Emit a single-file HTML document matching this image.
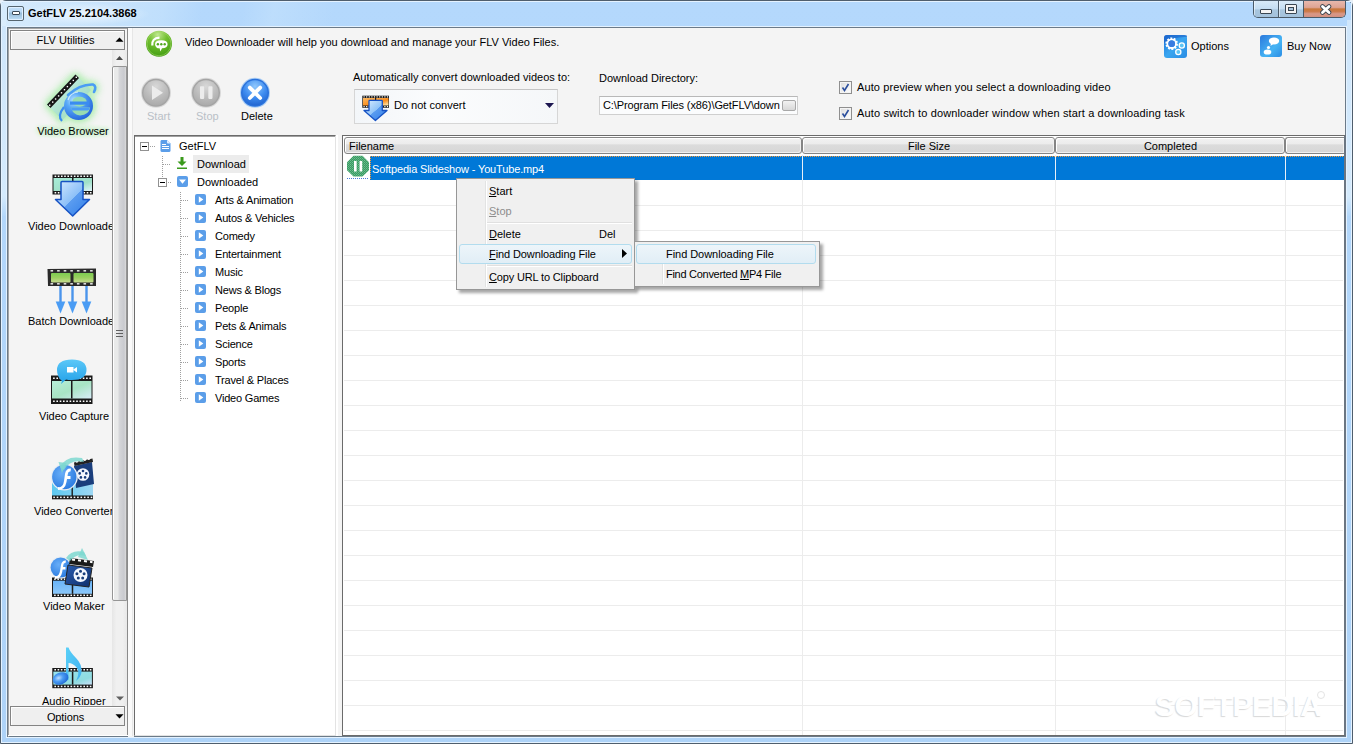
<!DOCTYPE html>
<html><head><meta charset="utf-8">
<style>
*{margin:0;padding:0;box-sizing:border-box}
html,body{width:1353px;height:744px;overflow:hidden;background:#e8eef4;font-family:"Liberation Sans",sans-serif;font-size:11px;color:#000}
.a{position:absolute}
.t{position:absolute;white-space:nowrap;line-height:13px}
#frame{left:0;top:0;width:1353px;height:744px;border:1px solid #4f5e6d;border-radius:6px 6px 0 0;background:linear-gradient(#b4d8fc,#aed3f8)}
#client{left:7px;top:27px;width:1339px;height:710px;background:#f4f4f4;border-top:1px solid #6b7a88;border-left:1px solid #6b7a88;border-right:1px solid #6b7a88;border-bottom:1px solid #6b7a88}
.hdr{height:17px;border:1px solid #858585;border-radius:3px;background:linear-gradient(#f2f2f2,#ececec 40%,#dcdcdc 45%,#d6d6d6);box-shadow:inset 1px 1px #fff,inset -1px -1px #f0f0f0}
.dh{height:1px;background-image:linear-gradient(90deg,#a0a0a0 50%,transparent 50%);background-size:2px 1px}
.dv{width:1px;background-image:linear-gradient(#a0a0a0 50%,transparent 50%);background-size:1px 2px}
.grid{background-image:linear-gradient(#ececec 1px,transparent 1px);background-size:100% 25px}
</style></head><body>
<div class="a" id="frame"></div>
<!-- frame highlight lines -->
<div class="a" style="left:1px;top:1px;width:1351px;height:1px;background:#e4f2ff"></div>
<div class="a" style="left:1px;top:1px;width:1px;height:742px;background:#e4f2ff"></div>
<div class="a" style="left:1351px;top:1px;width:1px;height:742px;background:#e4f2ff"></div>
<div class="a" style="left:2px;top:20px;width:4px;height:196px;background:linear-gradient(#cfe6fb,#d4eafc 90%,#b4d8fb)"></div><div class="a" style="left:1347px;top:20px;width:4px;height:196px;background:linear-gradient(#cfe6fb,#d4eafc 90%,#b4d8fb)"></div>
<div class="a" style="left:6px;top:26px;width:1341px;height:712px;border:1px solid #e4f2ff"></div><div class="a" style="left:1px;top:742px;width:1351px;height:1px;background:#e4f2ff"></div>

<!-- title -->
<div class="a" style="left:1px;top:2px;width:500px;height:24px;background:linear-gradient(100deg,rgba(220,238,252,.85) 0px,rgba(200,228,252,.6) 160px,rgba(176,214,251,0) 200px,rgba(176,214,251,0) 240px,rgba(200,228,252,.45) 270px,rgba(176,214,251,0) 330px)"></div>
<div class="a" style="left:20px;top:3px;width:130px;height:22px;background:radial-gradient(ellipse 65px 11px at 65px 11px,rgba(240,248,255,.9),rgba(240,248,255,0))"></div>
<div class="a" style="left:7px;top:6px;width:17px;height:15px;border:1px solid #56656f;border-radius:2px;background:linear-gradient(#c4e0f8,#b8d8f4 40%,#98bcd8 45%,#a0c4e0 60%,#c0e0f8);box-shadow:inset 0 0 0 1px #e0f0ff"></div>
<div class="a" style="left:12px;top:11px;width:8px;height:4px;border:1px solid #3c4a56;background:#fff;border-radius:1px"></div>
<div class="t" style="left:28px;top:7px;font-weight:bold;font-size:11px">GetFLV 25.2104.3868</div>

<!-- window buttons -->
<div class="a" style="left:1253px;top:1px;width:93px;height:17px;border:1px solid #4a5a68;border-top:none;border-radius:0 0 5px 5px;overflow:hidden;background:#a9c6de">
  <div class="a" style="left:0;top:0;width:24px;height:16px;background:linear-gradient(#d8eaf8,#c4ddf2 50%,#a8c6de 55%,#a4c2dc);box-shadow:inset 1px 0 rgba(255,255,255,.5)"></div>
  <div class="a" style="left:24px;top:0;width:1px;height:16px;background:#4a5a68"></div>
  <div class="a" style="left:25px;top:0;width:24px;height:16px;background:linear-gradient(#d8eaf8,#c4ddf2 50%,#a8c6de 55%,#a4c2dc);box-shadow:inset 1px 0 rgba(255,255,255,.5)"></div>
  <div class="a" style="left:49px;top:0;width:1px;height:16px;background:#4a5a68"></div>
  <div class="a" style="left:50px;top:0;width:43px;height:16px;background:linear-gradient(#e8b8ac,#dea494 40%,#c8783c 50%,#cc7a4a 65%,#d89888 80%,#d49080)"></div>
  <div class="a" style="left:6px;top:8px;width:12px;height:5px;border:1px solid #3a4652;background:#f4f4f4;border-radius:1px"></div>
  <div class="a" style="left:31px;top:3px;width:12px;height:10px;border:1px solid #3a4652;background:#f4f4f4;border-radius:1px"></div>
  <div class="a" style="left:34px;top:6px;width:6px;height:4px;border:1px solid #3a4652;background:#a9c6de"></div>
  <svg class="a" style="left:64px;top:1px" width="16" height="13" viewBox="0 0 16 13"><path d="M4.5 4.5 L11 10.5 M11 4.5 L4.5 10.5" stroke="#3e4650" stroke-width="4.6" stroke-linecap="round"/><path d="M4.5 4.5 L11 10.5 M11 4.5 L4.5 10.5" stroke="#fff" stroke-width="2.8" stroke-linecap="round"/></svg>
</div>

<div class="a" id="client"></div>

<!-- LEFT PANEL -->
<div class="a" style="left:8px;top:28px;width:1px;height:709px;background:#a5a5a5"></div>
<div class="a" style="left:8px;top:28px;width:119px;height:1px;background:#a5a5a5"></div>
<div class="a" style="left:127px;top:28px;width:1px;height:708px;background:#8b8b8b"></div>
<div class="a" style="left:10px;top:30px;width:115px;height:20px;border:1px solid #848484;background:#efefef;box-shadow:inset 1px 1px #fff"></div>
<div class="t" style="left:10px;top:34px;width:111px;text-align:center">FLV Utilities</div>
<svg class="a" style="left:115px;top:37px" width="9" height="5"><path d="M0.5 4.8 L4.5 0.6 L8.5 4.8Z" fill="#000"/></svg>


<!-- left scrollbar -->
<div class="a" style="left:112px;top:50px;width:15px;height:656px;background:linear-gradient(90deg,#e6e6e6,#f0f0f0 30%,#f0f0f0 70%,#e8e8e8)"></div>

<svg class="a" style="left:115px;top:55px" width="9" height="6"><path d="M1 5 L4.5 1 L8 5Z" fill="#4a4a4a"/></svg>
<div class="a" style="left:112px;top:66px;width:15px;height:535px;border:1px solid #959595;border-radius:2px 0 0 2px;background:linear-gradient(90deg,#fff 0,#fff 1px,#e9eaea 1px,#e9eaea 5px,#d6d7da 6px,#c9cacf 11px,#dcdcdc 13px)"></div>
<div class="a" style="left:116px;top:330px;width:7px;height:1px;background:#606060;box-shadow:0 3px #606060,0 6px #606060"></div>
<svg class="a" style="left:116px;top:696px" width="8" height="5"><path d="M0 0.5 L4 4.5 L8 0.5Z" fill="#606060"/></svg>
<div class="a" style="left:10px;top:706px;width:115px;height:20px;border:1px solid #848484;background:#efefef;box-shadow:inset 1px 1px #fff"></div>
<div class="t" style="left:10px;top:711px;width:111px;text-align:center;letter-spacing:-.1px">Options</div>
<svg class="a" style="left:115px;top:714px" width="9" height="5"><path d="M0.5 0.2 L4.5 4.4 L8.5 0.2Z" fill="#000"/></svg>
<div class="a" style="left:8px;top:735px;width:120px;height:1px;background:#fff"></div>

<!-- left icon labels -->
<div class="a" style="left:32px;top:122px;width:82px;height:18px;background:radial-gradient(ellipse 42px 9px at 41px 9px,rgba(214,244,214,.9),rgba(244,244,244,0))"></div>
<div class="a" style="left:9px;top:60px;width:103px;height:645px;overflow:hidden"><div class="t" style="left:3px;top:65px;width:122px;text-align:center;text-shadow:0 0 3px #c0eec0,0 0 5px #c8f0c8,0 0 6px #d0f2d0">Video Browser</div>
<div class="t" style="left:19px;top:160px">Video Downloader</div>
<div class="t" style="left:19px;top:255px">Batch Downloader</div>
<div class="t" style="left:30px;top:350px">Video Capture</div>
<div class="t" style="left:25px;top:445px">Video Converter</div>
<div class="t" style="left:34px;top:540px">Video Maker</div>
<div class="t" style="left:33px;top:635px">Audio Ripper</div>
</div>
<!-- cover clipped text -->


<!-- splitter between left & tree -->
<div class="a" style="left:128px;top:28px;width:6px;height:709px;background:#f4f4f4"></div>
<div class="a" style="left:128px;top:28px;width:4px;height:708px;background:#fafafa"></div><div class="a" style="left:132px;top:28px;width:1px;height:708px;background:#e6e6e6"></div>

<!-- TOOLBAR -->
<div class="t" style="left:185px;top:36px">Video Downloader will help you download and manage your FLV Video Files.</div>
<div class="t" style="left:147px;top:110px;color:#b9c0c7">Start</div>
<div class="t" style="left:196px;top:110px;color:#b9c0c7">Stop</div>
<div class="t" style="left:241px;top:110px">Delete</div>
<div class="t" style="left:353px;top:71px">Automatically convert downloaded videos to:</div>
<div class="a" style="left:354px;top:89px;width:204px;height:35px;border:1px solid #d6d6d6;border-top-color:#c4c4c4;background:linear-gradient(90deg,#f3f6f9,#fbfcfd 40%,#f5f7f9)"></div>
<div class="t" style="left:394px;top:99px">Do not convert</div>
<svg class="a" style="left:545px;top:103px" width="9" height="5"><path d="M0 0 L9 0 L4.5 5Z" fill="#1c1650"/></svg>
<div class="t" style="left:599px;top:72px">Download Directory:</div>
<div class="a" style="left:599px;top:96px;width:199px;height:19px;border:1px solid #cfcfcf;border-top-color:#b8b8b8;background:#fbfcfd"></div>
<div class="t" style="left:603px;top:99px;letter-spacing:-.1px">C:\Program Files (x86)\GetFLV\down</div>
<div class="a" style="left:782px;top:100px;width:14px;height:11px;border:1px solid #a8a8a8;border-radius:2px;background:linear-gradient(#f2f2f2,#d8d8d8)"></div>
<div class="a" style="left:839px;top:81px;width:13px;height:13px;border:1px solid #8f8f8f;background:linear-gradient(135deg,#dcdcdc,#fff);box-shadow:inset 0 0 0 1px #f4f4f4"></div>
<div class="a" style="left:839px;top:107px;width:13px;height:13px;border:1px solid #8f8f8f;background:linear-gradient(135deg,#dcdcdc,#fff);box-shadow:inset 0 0 0 1px #f4f4f4"></div>
<svg class="a" style="left:840px;top:82px" width="11" height="11"><path d="M2.5 5.5 L4.5 8.5 L8.5 2" stroke="#2b4e9c" stroke-width="1.6" fill="none"/></svg>
<svg class="a" style="left:840px;top:108px" width="11" height="11"><path d="M2.5 5.5 L4.5 8.5 L8.5 2" stroke="#2b4e9c" stroke-width="1.6" fill="none"/></svg>
<div class="t" style="left:857px;top:81px;letter-spacing:.1px">Auto preview when you select a downloading video</div>
<div class="t" style="left:857px;top:107px;letter-spacing:.14px">Auto switch to downloader window when start a downloading task</div>
<div class="t" style="left:1191px;top:40px">Options</div>
<div class="t" style="left:1287px;top:40px">Buy Now</div>

<!-- TREE PANEL -->
<div class="a" style="left:134px;top:135px;width:202px;height:601px;background:#fff;border:1px solid #e3e3e3;border-top-color:#6b6b6b;border-left-color:#6b6b6b"></div>
<div class="a" style="left:135px;top:136px;width:200px;height:599px;border-top:1px solid #a0a0a0"></div>

<!-- splitter between tree & list -->
<div class="a" style="left:336px;top:135px;width:6px;height:601px;background:#f4f4f4;border-left:2px solid #fff"></div>


<!-- LIST PANEL -->
<div class="a" style="left:342px;top:135px;width:1004px;height:601px;background:#fff;border:1px solid #6b6b6b;border-right:2px solid #6b7682"></div>
<div class="a grid" style="left:344px;top:205px;width:999px;height:530px"></div>


<!-- list header -->
<div class="a" style="left:344px;top:137px;width:999px;height:17px;background:#fff"></div>
<div class="a hdr" style="left:344px;top:137px;width:458px"></div>
<div class="a hdr" style="left:802px;top:137px;width:253px"></div>
<div class="a hdr" style="left:1055px;top:137px;width:230px"></div>
<div class="a hdr" style="left:1285px;top:137px;width:59px;border-right:none;border-radius:3px 0 0 3px"></div>
<div class="t" style="left:349px;top:140px">Filename</div>
<div class="t" style="left:802px;top:140px;width:254px;text-align:center">File Size</div>
<div class="t" style="left:1055px;top:140px;width:231px;text-align:center">Completed</div>
<!-- column grid lines -->
<div class="a" style="left:802px;top:155px;width:1px;height:580px;background:#ececec"></div>
<div class="a" style="left:1055px;top:155px;width:1px;height:580px;background:#ececec"></div>
<div class="a" style="left:1285px;top:155px;width:1px;height:580px;background:#ececec"></div>
<!-- selected row -->
<div class="a" style="left:370px;top:156px;width:974px;height:24px;background:#0078d7"></div>
<div class="a" style="left:370px;top:156px;width:974px;height:1px;background-image:linear-gradient(90deg,#f39a3a 50%,transparent 50%);background-size:2px 1px"></div>
<div class="a" style="left:370px;top:156px;width:1px;height:24px;background-image:linear-gradient(#f39a3a 50%,transparent 50%);background-size:1px 2px"></div>
<div class="a" style="left:802px;top:156px;width:1px;height:24px;background:#e8f0f8"></div>
<div class="a" style="left:1055px;top:156px;width:1px;height:24px;background:#e8f0f8"></div>
<div class="a" style="left:1285px;top:156px;width:1px;height:24px;background:#e8f0f8"></div>
<div class="t" style="left:372px;top:163px;color:#fff;letter-spacing:-.15px">Softpedia Slideshow - YouTube.mp4</div>
<svg class="a" style="left:346px;top:155px" width="24" height="25" viewBox="346 155 24 25"><defs><pattern id="p_dith" width="2" height="2" patternUnits="userSpaceOnUse"><rect width="2" height="2" fill="#3a9a62"/><rect width="1" height="1" fill="#6cc090"/><rect x="1" y="1" width="1" height="1" fill="#5ab080"/></pattern></defs>
 <path d="M353.5 155.8 H362.5 L369 162.3 V170.2 L362.5 176.6 H353.5 L347 170.2 V162.3Z" fill="url(#p_dith)"/>
 <rect x="354" y="161" width="2.6" height="10.5" fill="#fff"/><rect x="359.6" y="161" width="2.6" height="10.5" fill="#fff"/>
 <path d="M347 178.5 H369" stroke="#4a7ad8" stroke-width="1" stroke-dasharray="1 1"/>
</svg>

<!-- tree -->
<div class="a" style="left:140px;top:142px;width:9px;height:9px;border:1px solid #919191;background:#fff"></div>
<div class="a" style="left:142px;top:146px;width:5px;height:1px;background:#000"></div>
<div class="a" style="left:158px;top:178px;width:9px;height:9px;border:1px solid #919191;background:#fff"></div>
<div class="a" style="left:160px;top:182px;width:5px;height:1px;background:#000"></div>
<div class="a dh" style="left:150px;top:146px;width:6px"></div>
<div class="a dv" style="left:162px;top:156px;height:22px"></div>
<div class="a dh" style="left:163px;top:164px;width:8px"></div>
<div class="a dh" style="left:168px;top:182px;width:4px"></div>
<div class="a dv" style="left:180px;top:192px;height:210px"></div>
<div class="a" id="treeh"></div>
<svg class="a" style="left:160px;top:140px" width="11" height="12" viewBox="0 0 11 12"><path d="M1.5 0 H7 L10.5 3.5 V10.5 Q10.5 12 9 12 H2 Q0.5 12 0.5 10.5 V1.5 Q0.5 0 1.5 0Z" fill="#5b9ee9"/><path d="M7 0 L10.5 3.5 H8 Q7 3.5 7 2.5Z" fill="#e4efff"/><path d="M2 4.5 H6 M2 6.5 H9 M2 8.5 H9" stroke="#fff" stroke-width="1"/></svg>
<div class="a" style="left:193px;top:155px;width:56px;height:18px;background:#ececec"></div>
<svg class="a" style="left:177px;top:157px" width="10" height="12" viewBox="0 0 10 12"><path d="M3.5 0 H6.5 V4.5 H9.5 L5 9 L0.5 4.5 H3.5Z" fill="#3a9a1c"/><rect x="0" y="10.5" width="10" height="1.5" fill="#3a9a1c"/></svg>
<div class="t" style="left:179px;top:140px">GetFLV</div>
<div class="t" style="left:197px;top:158px">Download</div>
<svg class="a" style="left:177px;top:176px" width="11" height="11" viewBox="0 0 11 11"><rect x="0" y="0" width="11" height="11" rx="2" fill="#5b9ee9"/><path d="M2 3.5 H9 L5.5 7.8Z" fill="#fff"/></svg>
<div class="t" style="left:197px;top:176px">Downloaded</div>
<div class="a dh" style="left:181px;top:200px;width:8px"></div><svg class="a" style="left:195px;top:194px" width="11" height="11" viewBox="0 0 11 11"><rect x="0" y="0" width="11" height="11" rx="2" fill="#5b9ee9"/><path d="M3.8 2.2 V8.8 L8.3 5.5Z" fill="#fff"/></svg><div class="t" style="left:215px;top:194px;letter-spacing:-.2px">Arts &amp; Animation</div>
<div class="a dh" style="left:181px;top:218px;width:8px"></div><svg class="a" style="left:195px;top:212px" width="11" height="11" viewBox="0 0 11 11"><rect x="0" y="0" width="11" height="11" rx="2" fill="#5b9ee9"/><path d="M3.8 2.2 V8.8 L8.3 5.5Z" fill="#fff"/></svg><div class="t" style="left:215px;top:212px;letter-spacing:-.2px">Autos &amp; Vehicles</div>
<div class="a dh" style="left:181px;top:236px;width:8px"></div><svg class="a" style="left:195px;top:230px" width="11" height="11" viewBox="0 0 11 11"><rect x="0" y="0" width="11" height="11" rx="2" fill="#5b9ee9"/><path d="M3.8 2.2 V8.8 L8.3 5.5Z" fill="#fff"/></svg><div class="t" style="left:215px;top:230px;letter-spacing:-.2px">Comedy</div>
<div class="a dh" style="left:181px;top:254px;width:8px"></div><svg class="a" style="left:195px;top:248px" width="11" height="11" viewBox="0 0 11 11"><rect x="0" y="0" width="11" height="11" rx="2" fill="#5b9ee9"/><path d="M3.8 2.2 V8.8 L8.3 5.5Z" fill="#fff"/></svg><div class="t" style="left:215px;top:248px;letter-spacing:-.2px">Entertainment</div>
<div class="a dh" style="left:181px;top:272px;width:8px"></div><svg class="a" style="left:195px;top:266px" width="11" height="11" viewBox="0 0 11 11"><rect x="0" y="0" width="11" height="11" rx="2" fill="#5b9ee9"/><path d="M3.8 2.2 V8.8 L8.3 5.5Z" fill="#fff"/></svg><div class="t" style="left:215px;top:266px;letter-spacing:-.2px">Music</div>
<div class="a dh" style="left:181px;top:290px;width:8px"></div><svg class="a" style="left:195px;top:284px" width="11" height="11" viewBox="0 0 11 11"><rect x="0" y="0" width="11" height="11" rx="2" fill="#5b9ee9"/><path d="M3.8 2.2 V8.8 L8.3 5.5Z" fill="#fff"/></svg><div class="t" style="left:215px;top:284px;letter-spacing:-.2px">News &amp; Blogs</div>
<div class="a dh" style="left:181px;top:308px;width:8px"></div><svg class="a" style="left:195px;top:302px" width="11" height="11" viewBox="0 0 11 11"><rect x="0" y="0" width="11" height="11" rx="2" fill="#5b9ee9"/><path d="M3.8 2.2 V8.8 L8.3 5.5Z" fill="#fff"/></svg><div class="t" style="left:215px;top:302px;letter-spacing:-.2px">People</div>
<div class="a dh" style="left:181px;top:326px;width:8px"></div><svg class="a" style="left:195px;top:320px" width="11" height="11" viewBox="0 0 11 11"><rect x="0" y="0" width="11" height="11" rx="2" fill="#5b9ee9"/><path d="M3.8 2.2 V8.8 L8.3 5.5Z" fill="#fff"/></svg><div class="t" style="left:215px;top:320px;letter-spacing:-.2px">Pets &amp; Animals</div>
<div class="a dh" style="left:181px;top:344px;width:8px"></div><svg class="a" style="left:195px;top:338px" width="11" height="11" viewBox="0 0 11 11"><rect x="0" y="0" width="11" height="11" rx="2" fill="#5b9ee9"/><path d="M3.8 2.2 V8.8 L8.3 5.5Z" fill="#fff"/></svg><div class="t" style="left:215px;top:338px;letter-spacing:-.2px">Science</div>
<div class="a dh" style="left:181px;top:362px;width:8px"></div><svg class="a" style="left:195px;top:356px" width="11" height="11" viewBox="0 0 11 11"><rect x="0" y="0" width="11" height="11" rx="2" fill="#5b9ee9"/><path d="M3.8 2.2 V8.8 L8.3 5.5Z" fill="#fff"/></svg><div class="t" style="left:215px;top:356px;letter-spacing:-.2px">Sports</div>
<div class="a dh" style="left:181px;top:380px;width:8px"></div><svg class="a" style="left:195px;top:374px" width="11" height="11" viewBox="0 0 11 11"><rect x="0" y="0" width="11" height="11" rx="2" fill="#5b9ee9"/><path d="M3.8 2.2 V8.8 L8.3 5.5Z" fill="#fff"/></svg><div class="t" style="left:215px;top:374px;letter-spacing:-.2px">Travel &amp; Places</div>
<div class="a dh" style="left:181px;top:398px;width:8px"></div><svg class="a" style="left:195px;top:392px" width="11" height="11" viewBox="0 0 11 11"><rect x="0" y="0" width="11" height="11" rx="2" fill="#5b9ee9"/><path d="M3.8 2.2 V8.8 L8.3 5.5Z" fill="#fff"/></svg><div class="t" style="left:215px;top:392px;letter-spacing:-.2px">Video Games</div>

<!-- context menu -->
<div class="a" style="left:459px;top:181px;width:179px;height:112px;background:rgba(0,0,0,.35);filter:blur(1.5px)"></div>
<div class="a" style="left:456px;top:178px;width:179px;height:112px;background:#f0f0f0;border:1px solid #979797"></div>
<div class="a" style="left:485px;top:181px;width:1px;height:106px;background:#e2e3e3;box-shadow:1px 0 #fff"></div>
<div class="a" style="left:487px;top:222px;width:145px;height:1px;background:#e0e0e0;box-shadow:0 1px #fff"></div>
<div class="a" style="left:487px;top:265px;width:145px;height:1px;background:#e0e0e0;box-shadow:0 1px #fff"></div>
<div class="a" style="left:459px;top:244px;width:173px;height:20px;border:1px solid #b2dcee;border-radius:3px;background:linear-gradient(#edf5fa,#e1eef6)"></div>
<div class="t" style="left:489px;top:185px"><u>S</u>tart</div>
<div class="t" style="left:489px;top:205px;color:#8d8d8d"><u>S</u>top</div>
<div class="t" style="left:489px;top:228px"><u>D</u>elete</div>
<div class="t" style="left:599px;top:228px">Del</div>
<div class="t" style="left:489px;top:248px;letter-spacing:-.1px"><u>F</u>ind Downloading File</div>
<svg class="a" style="left:622px;top:249px" width="5" height="9"><path d="M0 0 L5 4.5 L0 9Z" fill="#000"/></svg>
<div class="t" style="left:489px;top:271px;letter-spacing:-.15px"><u>C</u>opy URL to Clipboard</div>
<!-- submenu -->
<div class="a" style="left:637px;top:244px;width:186px;height:46px;background:rgba(0,0,0,.35);filter:blur(1.5px)"></div>
<div class="a" style="left:634px;top:241px;width:186px;height:46px;background:#f0f0f0;border:1px solid #979797"></div>
<div class="a" style="left:662px;top:244px;width:1px;height:40px;background:#e2e3e3;box-shadow:1px 0 #fff"></div>
<div class="a" style="left:636px;top:244px;width:180px;height:20px;border:1px solid #b2dcee;border-radius:3px;background:linear-gradient(#edf5fa,#e1eef6)"></div>
<div class="t" style="left:666px;top:248px;letter-spacing:-.05px">Find Downloading File</div>
<div class="t" style="left:666px;top:268px;letter-spacing:-.28px">Find Converted <u>M</u>P4 File</div>

<!-- ICONS_LEFT -->
<svg class="a" style="left:44px;top:168px" width="56" height="52" viewBox="44 168 56 52"><defs><linearGradient id="g_fr1" x1="0" y1="0" x2="1" y2="1"><stop offset="0" stop-color="#a8ecd8"/><stop offset=".6" stop-color="#9fe0c8"/><stop offset="1" stop-color="#e0f4fa"/></linearGradient><linearGradient id="g_ar1" x1="0" y1="0" x2="1" y2="1"><stop offset="0" stop-color="#d8ebff"/><stop offset=".5" stop-color="#8cc0f8"/><stop offset=".51" stop-color="#5a9cf0"/><stop offset="1" stop-color="#2f7de8"/></linearGradient></defs><rect x="52.5" y="174.5" width="40.5" height="20" fill="#1a1a1a"/><rect x="53.5" y="178.0" width="38.5" height="13.0" fill="url(#g_fr1)"/><rect x="54.6" y="175.5" width="1.6" height="1.5" fill="#fff"/><rect x="54.6" y="192.0" width="1.6" height="1.5" fill="#fff"/><rect x="57.8" y="175.5" width="1.6" height="1.5" fill="#fff"/><rect x="57.8" y="192.0" width="1.6" height="1.5" fill="#fff"/><rect x="61.0" y="175.5" width="1.6" height="1.5" fill="#fff"/><rect x="61.0" y="192.0" width="1.6" height="1.5" fill="#fff"/><rect x="64.2" y="175.5" width="1.6" height="1.5" fill="#fff"/><rect x="64.2" y="192.0" width="1.6" height="1.5" fill="#fff"/><rect x="67.4" y="175.5" width="1.6" height="1.5" fill="#fff"/><rect x="67.4" y="192.0" width="1.6" height="1.5" fill="#fff"/><rect x="70.6" y="175.5" width="1.6" height="1.5" fill="#fff"/><rect x="70.6" y="192.0" width="1.6" height="1.5" fill="#fff"/><rect x="73.9" y="175.5" width="1.6" height="1.5" fill="#fff"/><rect x="73.9" y="192.0" width="1.6" height="1.5" fill="#fff"/><rect x="77.1" y="175.5" width="1.6" height="1.5" fill="#fff"/><rect x="77.1" y="192.0" width="1.6" height="1.5" fill="#fff"/><rect x="80.3" y="175.5" width="1.6" height="1.5" fill="#fff"/><rect x="80.3" y="192.0" width="1.6" height="1.5" fill="#fff"/><rect x="83.5" y="175.5" width="1.6" height="1.5" fill="#fff"/><rect x="83.5" y="192.0" width="1.6" height="1.5" fill="#fff"/><rect x="86.7" y="175.5" width="1.6" height="1.5" fill="#fff"/><rect x="86.7" y="192.0" width="1.6" height="1.5" fill="#fff"/><rect x="89.9" y="175.5" width="1.6" height="1.5" fill="#fff"/><rect x="89.9" y="192.0" width="1.6" height="1.5" fill="#fff"/><rect x="72.0" y="178.0" width="1.5" height="13.0" fill="#1a1a1a"/><path d="M61 182.5 Q61 181.5 62 181.5 H82 Q83 181.5 83 182.5 V199.5 H89.5 L72.7 216 L55.5 199.5 H61Z" fill="url(#g_ar1)" stroke="#1652c4" stroke-width="1.5" stroke-linejoin="round"/></svg>
<svg class="a" style="left:40px;top:262px" width="64" height="56" viewBox="40 262 64 56"><defs><linearGradient id="g_gr" x1="0" y1="0" x2="0" y2="1"><stop offset="0" stop-color="#7ccc50"/><stop offset=".5" stop-color="#9ad060"/><stop offset="1" stop-color="#c8dc90"/></linearGradient></defs><path d="M47.5 269 L96 268.5 L96 286 L48 286Z" fill="#2a2a2a"/><rect x="50.5" y="270" width="2.6" height="1.6" fill="#ddd"/><rect x="50.5" y="283" width="2.6" height="1.6" fill="#ddd"/><rect x="57.1" y="270" width="2.6" height="1.6" fill="#ddd"/><rect x="57.1" y="283" width="2.6" height="1.6" fill="#ddd"/><rect x="63.7" y="270" width="2.6" height="1.6" fill="#ddd"/><rect x="63.7" y="283" width="2.6" height="1.6" fill="#ddd"/><rect x="70.3" y="270" width="2.6" height="1.6" fill="#ddd"/><rect x="70.3" y="283" width="2.6" height="1.6" fill="#ddd"/><rect x="76.9" y="270" width="2.6" height="1.6" fill="#ddd"/><rect x="76.9" y="283" width="2.6" height="1.6" fill="#ddd"/><rect x="83.5" y="270" width="2.6" height="1.6" fill="#ddd"/><rect x="83.5" y="283" width="2.6" height="1.6" fill="#ddd"/><rect x="90.1" y="270" width="2.6" height="1.6" fill="#ddd"/><rect x="90.1" y="283" width="2.6" height="1.6" fill="#ddd"/><rect x="51" y="273" width="19.5" height="9.5" rx="1" fill="url(#g_gr)"/><rect x="73.5" y="273" width="20" height="9.5" rx="1" fill="url(#g_gr)"/><rect x="59.3" y="286" width="2.4" height="16" fill="#4a94ec"/><path d="M55.7 301.5 H65.3 L60.5 313.5Z" fill="#4a9cf4"/><rect x="71.3" y="286" width="2.4" height="16" fill="#4a94ec"/><path d="M67.7 301.5 H77.3 L72.5 313.5Z" fill="#4a9cf4"/><rect x="85.3" y="286" width="2.4" height="16" fill="#4a94ec"/><path d="M81.7 301.5 H91.3 L86.5 313.5Z" fill="#4a9cf4"/></svg>
<svg class="a" style="left:44px;top:352px" width="56" height="56" viewBox="44 352 56 56"><defs><linearGradient id="g_fr2" x1="0" y1="0" x2="1" y2="1"><stop offset="0" stop-color="#b8eed8"/><stop offset=".5" stop-color="#a8e4c4"/><stop offset="1" stop-color="#d8ecf8"/></linearGradient><linearGradient id="g_bb" x1="0" y1="0" x2="0" y2="1"><stop offset="0" stop-color="#5cc8f8"/><stop offset="1" stop-color="#22a0e8"/></linearGradient></defs><rect x="51" y="375.5" width="41.5" height="28.5" fill="#1a1a1a"/><rect x="52" y="381.0" width="39.5" height="17.5" fill="url(#g_fr2)"/><rect x="53.1" y="377.5" width="1.6" height="1.5" fill="#fff"/><rect x="53.1" y="400.5" width="1.6" height="1.5" fill="#fff"/><rect x="56.4" y="377.5" width="1.6" height="1.5" fill="#fff"/><rect x="56.4" y="400.5" width="1.6" height="1.5" fill="#fff"/><rect x="59.7" y="377.5" width="1.6" height="1.5" fill="#fff"/><rect x="59.7" y="400.5" width="1.6" height="1.5" fill="#fff"/><rect x="63.0" y="377.5" width="1.6" height="1.5" fill="#fff"/><rect x="63.0" y="400.5" width="1.6" height="1.5" fill="#fff"/><rect x="66.3" y="377.5" width="1.6" height="1.5" fill="#fff"/><rect x="66.3" y="400.5" width="1.6" height="1.5" fill="#fff"/><rect x="69.6" y="377.5" width="1.6" height="1.5" fill="#fff"/><rect x="69.6" y="400.5" width="1.6" height="1.5" fill="#fff"/><rect x="72.9" y="377.5" width="1.6" height="1.5" fill="#fff"/><rect x="72.9" y="400.5" width="1.6" height="1.5" fill="#fff"/><rect x="76.2" y="377.5" width="1.6" height="1.5" fill="#fff"/><rect x="76.2" y="400.5" width="1.6" height="1.5" fill="#fff"/><rect x="79.5" y="377.5" width="1.6" height="1.5" fill="#fff"/><rect x="79.5" y="400.5" width="1.6" height="1.5" fill="#fff"/><rect x="82.8" y="377.5" width="1.6" height="1.5" fill="#fff"/><rect x="82.8" y="400.5" width="1.6" height="1.5" fill="#fff"/><rect x="86.1" y="377.5" width="1.6" height="1.5" fill="#fff"/><rect x="86.1" y="400.5" width="1.6" height="1.5" fill="#fff"/><rect x="89.4" y="377.5" width="1.6" height="1.5" fill="#fff"/><rect x="89.4" y="400.5" width="1.6" height="1.5" fill="#fff"/><rect x="71.0" y="381.0" width="1.5" height="17.5" fill="#1a1a1a"/><path d="M62 381 Q57 377 57 370 Q57 359.5 72 359.5 Q86.5 359.5 86.5 370 Q86.5 380 72 380 Q68 380 66 379.5 L61 384Z" fill="url(#g_bb)"/><rect x="67" y="367" width="6.5" height="5.5" fill="#fff"/><path d="M73 369.7 L77 367 V372.5Z" fill="#fff"/></svg>
<svg class="a" style="left:44px;top:450px" width="56" height="52" viewBox="44 450 56 52"><defs><linearGradient id="g_fr3" x1="0" y1="0" x2="1" y2="0"><stop offset="0" stop-color="#5cc8f0"/><stop offset="1" stop-color="#9ed8f4"/></linearGradient><radialGradient id="g_cf" cx=".4" cy=".35" r=".7"><stop offset="0" stop-color="#68aef8"/><stop offset="1" stop-color="#2a7ae0"/></radialGradient></defs><rect x="52" y="482" width="41" height="17" fill="url(#g_fr3)"/><rect x="52" y="495.5" width="41" height="3.8" fill="#1a1a1a"/><rect x="53.3" y="496.6" width="1.6" height="1.5" fill="#fff"/><rect x="56.7" y="496.6" width="1.6" height="1.5" fill="#fff"/><rect x="60.1" y="496.6" width="1.6" height="1.5" fill="#fff"/><rect x="63.5" y="496.6" width="1.6" height="1.5" fill="#fff"/><rect x="66.9" y="496.6" width="1.6" height="1.5" fill="#fff"/><rect x="70.3" y="496.6" width="1.6" height="1.5" fill="#fff"/><rect x="73.7" y="496.6" width="1.6" height="1.5" fill="#fff"/><rect x="77.1" y="496.6" width="1.6" height="1.5" fill="#fff"/><rect x="80.5" y="496.6" width="1.6" height="1.5" fill="#fff"/><rect x="83.9" y="496.6" width="1.6" height="1.5" fill="#fff"/><rect x="87.3" y="496.6" width="1.6" height="1.5" fill="#fff"/><rect x="90.7" y="496.6" width="1.6" height="1.5" fill="#fff"/><rect x="71.5" y="482" width="1.4" height="14" fill="#1a1a1a"/><path d="M74 466 L92 462 L94 484 L76 488Z" fill="#1a3e7c"/><path d="M74 462.5 L92.5 458.5 L93 462 L74.5 466Z" fill="#222"/><path d="M76 462 l2 -0.5 M80 461 l2 -0.5 M84 460.2 l2 -0.5 M88 459.4 l2 -0.5" stroke="#fff" stroke-width="1.4"/><circle cx="83" cy="474.5" r="6.3" fill="#f4f8ff"/><circle cx="83" cy="471.0" r="1.3" fill="#1a3e7c"/><circle cx="86.3" cy="473.4" r="1.3" fill="#1a3e7c"/><circle cx="85.1" cy="477.4" r="1.3" fill="#1a3e7c"/><circle cx="80.9" cy="477.4" r="1.3" fill="#1a3e7c"/><circle cx="79.7" cy="473.4" r="1.3" fill="#1a3e7c"/><circle cx="64.3" cy="477" r="13.5" fill="#e8eef4"/><circle cx="64.3" cy="477" r="12.2" fill="url(#g_cf)"/><path d="M58 487 Q63 488 64 481 L65 474 Q66 468 71 468.5 L70.5 471.5 Q68 471 67.8 474 L67.5 476 H70.5 V479 H67 L66.5 482 Q65 490 58 490Z" fill="#fff"/><path d="M60 467 Q66 455 82 458 L84 462 Q70 459 64 470Z" fill="#7ed8d0" opacity=".85"/><path d="M58.5 462 L62 473 L66.5 463Z" fill="#7ed8d0" opacity=".85"/></svg>
<svg class="a" style="left:44px;top:545px" width="56" height="56" viewBox="44 545 56 56"><defs><linearGradient id="g_fr4" x1="0" y1="0" x2="0" y2="1"><stop offset="0" stop-color="#6ab4f8"/><stop offset="1" stop-color="#8cc8fa"/></linearGradient><radialGradient id="g_cf2" cx=".4" cy=".35" r=".7"><stop offset="0" stop-color="#68aef8"/><stop offset="1" stop-color="#2a7ae0"/></radialGradient><linearGradient id="g_cl" x1="0" y1="0" x2="1" y2="1"><stop offset="0" stop-color="#2a5cb0"/><stop offset="1" stop-color="#0e2e6a"/></linearGradient></defs><rect x="52" y="577.5" width="41" height="19.5" fill="#1a1a1a"/><rect x="53" y="580.7" width="39" height="13.1" fill="url(#g_fr4)"/><rect x="54.1" y="578.4" width="1.6" height="1.5" fill="#fff"/><rect x="54.1" y="594.6" width="1.6" height="1.5" fill="#fff"/><rect x="57.4" y="578.4" width="1.6" height="1.5" fill="#fff"/><rect x="57.4" y="594.6" width="1.6" height="1.5" fill="#fff"/><rect x="60.6" y="578.4" width="1.6" height="1.5" fill="#fff"/><rect x="60.6" y="594.6" width="1.6" height="1.5" fill="#fff"/><rect x="63.9" y="578.4" width="1.6" height="1.5" fill="#fff"/><rect x="63.9" y="594.6" width="1.6" height="1.5" fill="#fff"/><rect x="67.1" y="578.4" width="1.6" height="1.5" fill="#fff"/><rect x="67.1" y="594.6" width="1.6" height="1.5" fill="#fff"/><rect x="70.4" y="578.4" width="1.6" height="1.5" fill="#fff"/><rect x="70.4" y="594.6" width="1.6" height="1.5" fill="#fff"/><rect x="73.6" y="578.4" width="1.6" height="1.5" fill="#fff"/><rect x="73.6" y="594.6" width="1.6" height="1.5" fill="#fff"/><rect x="76.9" y="578.4" width="1.6" height="1.5" fill="#fff"/><rect x="76.9" y="594.6" width="1.6" height="1.5" fill="#fff"/><rect x="80.1" y="578.4" width="1.6" height="1.5" fill="#fff"/><rect x="80.1" y="594.6" width="1.6" height="1.5" fill="#fff"/><rect x="83.4" y="578.4" width="1.6" height="1.5" fill="#fff"/><rect x="83.4" y="594.6" width="1.6" height="1.5" fill="#fff"/><rect x="86.6" y="578.4" width="1.6" height="1.5" fill="#fff"/><rect x="86.6" y="594.6" width="1.6" height="1.5" fill="#fff"/><rect x="89.9" y="578.4" width="1.6" height="1.5" fill="#fff"/><rect x="89.9" y="594.6" width="1.6" height="1.5" fill="#fff"/><rect x="71.75" y="580.7" width="1.5" height="13.1" fill="#1a1a1a"/><circle cx="60.6" cy="567.6" r="11" fill="#e8eef4"/><circle cx="60.6" cy="567.6" r="10" fill="url(#g_cf2)"/><path d="M55 576 Q59 577 60 571 L61 565 Q62 560 66 560.5 L65.5 563 Q63.5 562.7 63.3 565 L63 567 H65.5 V569.5 H62.6 L62.2 572 Q61 579 55 579Z" fill="#fff"/><path d="M68 565 L92 568 L89 587 L65 584Z" fill="url(#g_cl)" stroke="#222" stroke-width="1"/><path d="M70 558 L94 561 L93 567 L69 564Z" fill="#1a1a1a"/><path d="M72 559.5 l3 0.5 M78 560.3 l3 0.5 M84 561 l3 0.5 M90 561.8 l2.5 0.4" stroke="#fff" stroke-width="2"/><circle cx="80.5" cy="575" r="7" fill="#f4f8ff"/><circle cx="80.5" cy="571.2" r="1.5" fill="#1a3e7c"/><circle cx="84.1" cy="573.8" r="1.5" fill="#1a3e7c"/><circle cx="82.7" cy="578.1" r="1.5" fill="#1a3e7c"/><circle cx="78.3" cy="578.1" r="1.5" fill="#1a3e7c"/><circle cx="76.9" cy="573.8" r="1.5" fill="#1a3e7c"/><path d="M66 558 Q72 549 84 552 L86 556 Q76 553 70 561Z" fill="#7ed8d0" opacity=".85"/><path d="M82 548 L88 560 L78 557Z" fill="#7ed8d0" opacity=".85"/></svg>
<svg class="a" style="left:44px;top:640px" width="56" height="56" viewBox="44 640 56 56"><defs><linearGradient id="g_fr5" x1="0" y1="0" x2="1" y2="1"><stop offset="0" stop-color="#98e4f0"/><stop offset=".7" stop-color="#90dce0"/><stop offset="1" stop-color="#c8e0f8"/></linearGradient><radialGradient id="g_nh" cx=".4" cy=".4" r=".7"><stop offset="0" stop-color="#c0e0ff"/><stop offset=".4" stop-color="#4a9cf4"/><stop offset="1" stop-color="#1a60d0"/></radialGradient><linearGradient id="g_nf" x1="0" y1="0" x2="1" y2="1"><stop offset="0" stop-color="#5ad0f8"/><stop offset="1" stop-color="#40b0f0"/></linearGradient></defs><rect x="52.3" y="668" width="40.6" height="20.2" fill="#1a1a1a"/><rect x="53.3" y="671.6" width="38.6" height="13.0" fill="url(#g_fr5)"/><rect x="54.4" y="669.0" width="1.6" height="1.5" fill="#fff"/><rect x="54.4" y="685.7" width="1.6" height="1.5" fill="#fff"/><rect x="57.6" y="669.0" width="1.6" height="1.5" fill="#fff"/><rect x="57.6" y="685.7" width="1.6" height="1.5" fill="#fff"/><rect x="60.8" y="669.0" width="1.6" height="1.5" fill="#fff"/><rect x="60.8" y="685.7" width="1.6" height="1.5" fill="#fff"/><rect x="64.1" y="669.0" width="1.6" height="1.5" fill="#fff"/><rect x="64.1" y="685.7" width="1.6" height="1.5" fill="#fff"/><rect x="67.3" y="669.0" width="1.6" height="1.5" fill="#fff"/><rect x="67.3" y="685.7" width="1.6" height="1.5" fill="#fff"/><rect x="70.5" y="669.0" width="1.6" height="1.5" fill="#fff"/><rect x="70.5" y="685.7" width="1.6" height="1.5" fill="#fff"/><rect x="73.7" y="669.0" width="1.6" height="1.5" fill="#fff"/><rect x="73.7" y="685.7" width="1.6" height="1.5" fill="#fff"/><rect x="76.9" y="669.0" width="1.6" height="1.5" fill="#fff"/><rect x="76.9" y="685.7" width="1.6" height="1.5" fill="#fff"/><rect x="80.1" y="669.0" width="1.6" height="1.5" fill="#fff"/><rect x="80.1" y="685.7" width="1.6" height="1.5" fill="#fff"/><rect x="83.4" y="669.0" width="1.6" height="1.5" fill="#fff"/><rect x="83.4" y="685.7" width="1.6" height="1.5" fill="#fff"/><rect x="86.6" y="669.0" width="1.6" height="1.5" fill="#fff"/><rect x="86.6" y="685.7" width="1.6" height="1.5" fill="#fff"/><rect x="89.8" y="669.0" width="1.6" height="1.5" fill="#fff"/><rect x="89.8" y="685.7" width="1.6" height="1.5" fill="#fff"/><rect x="71.85" y="671.6" width="1.5" height="13.0" fill="#1a1a1a"/><path d="M66 647.5 L68.5 647.5 Q70 652 76 658 Q82 664 81.5 672 Q81 677 76 681 Q80 673 77 668 Q73 663 68.5 663 V680 H66Z" fill="url(#g_nf)"/><ellipse cx="60.5" cy="678.5" rx="8.2" ry="5.8" transform="rotate(-22 60.5 678.5)" fill="url(#g_nh)"/></svg>
<svg class="a" style="left:40px;top:66px;filter:drop-shadow(0 0 3px #b4ecb4) drop-shadow(0 0 3px #c0f0c0) drop-shadow(0 0 2px #c8f0c8)" width="62" height="62" viewBox="40 66 62 62"><defs><radialGradient id="g_ie" cx=".35" cy=".3" r=".8"><stop offset="0" stop-color="#b8e4ff"/><stop offset=".35" stop-color="#58a8f8"/><stop offset="1" stop-color="#1e5ed8"/></radialGradient><linearGradient id="g_dfr" x1="0" y1="0" x2="1" y2="1"><stop offset="0" stop-color="#e0f4fa"/><stop offset=".5" stop-color="#b0e4d0"/><stop offset="1" stop-color="#98d8b8"/></linearGradient></defs><path d="M75.5 74.5 L91 90 L62.5 120 L47 104.5Z" fill="url(#g_dfr)"/><path d="M75.5 74.5 L47 104.5 L50.5 108 L79 78Z" fill="#161616"/><rect x="75.6" y="76.6" width="1.4" height="1.4" fill="#fff"/><rect x="72.6" y="79.7" width="1.4" height="1.4" fill="#fff"/><rect x="69.7" y="82.8" width="1.4" height="1.4" fill="#fff"/><rect x="66.7" y="85.9" width="1.4" height="1.4" fill="#fff"/><rect x="63.8" y="89.0" width="1.4" height="1.4" fill="#fff"/><rect x="60.8" y="92.1" width="1.4" height="1.4" fill="#fff"/><rect x="57.9" y="95.2" width="1.4" height="1.4" fill="#fff"/><rect x="54.9" y="98.3" width="1.4" height="1.4" fill="#fff"/><rect x="52.0" y="101.4" width="1.4" height="1.4" fill="#fff"/><rect x="49.0" y="104.5" width="1.4" height="1.4" fill="#fff"/><path d="M62 121 Q57 116 64 107" stroke="#3a8cf0" stroke-width="2.2" fill="none"/><path d="M68 95 Q80 84 93 84.5 Q97 86 94 92" stroke="#4a9cf4" stroke-width="2.6" fill="none" stroke-linecap="round"/><ellipse cx="78.5" cy="106" rx="14.5" ry="14" fill="url(#g_ie)"/><ellipse cx="79.5" cy="101.8" rx="7.2" ry="5" fill="#98dcb0"/><rect x="70" y="101.5" width="19" height="3.2" fill="#3a8cf0"/><path d="M71 107.5 H90 Q89 115 80 115.5 Q73 115 71 107.5Z" fill="#98dcb0"/><path d="M71 107.5 H90 Q89 110 88 110.5 H72Z" fill="#4a9cf4"/><path d="M68 100 Q70 93 78 92" stroke="#e8f6ff" stroke-width="1.2" fill="none" opacity=".8"/></svg>
<!-- /ICONS_LEFT -->
<!-- ICONS_TOP -->
<svg class="a" style="left:144px;top:29px" width="30" height="30" viewBox="144 29 30 30"><defs><radialGradient id="g_gc" cx=".45" cy=".15" r=".9"><stop offset="0" stop-color="#c0e890"/><stop offset=".4" stop-color="#72c030"/><stop offset="1" stop-color="#3e9a10"/></radialGradient></defs><circle cx="159" cy="43.8" r="13" fill="url(#g_gc)"/><circle cx="159" cy="43.8" r="12" fill="none" stroke="#a8d870" stroke-width=".8" opacity=".7"/><path d="M152.3 45.5 Q151.5 38.2 159.5 37.6" stroke="#fff" stroke-width="2.2" fill="none"/><path d="M157 48 Q155 46.8 155 44.3 Q155 40.3 161.3 40.3 Q167.6 40.3 167.6 44.3 Q167.6 48.2 162 48.2 L160.4 51.5 L159.6 48.3 Q158 48.2 157 48Z" fill="#fff"/><circle cx="157.9" cy="44.3" r="1.2" fill="#52a820"/><circle cx="161.3" cy="44.3" r="1.2" fill="#52a820"/><circle cx="164.7" cy="44.3" r="1.2" fill="#52a820"/></svg>
<svg class="a" style="left:139px;top:76px" width="136" height="34" viewBox="139 76 136 34"><defs><radialGradient id="g_st" cx=".5" cy=".25" r=".8"><stop offset="0" stop-color="#d8d8d8"/><stop offset=".55" stop-color="#bcbcbc"/><stop offset="1" stop-color="#a8a8a8"/></radialGradient></defs><circle cx="156" cy="92.8" r="15" fill="#d8d8d8"/><circle cx="156" cy="92.8" r="14" fill="#a4a4a4"/><circle cx="156" cy="92.8" r="12.6" fill="url(#g_st)"/><path d="M152 85.5 L163 92.8 L152 100Z" fill="#ececec"/><defs><radialGradient id="g_sp" cx=".5" cy=".25" r=".8"><stop offset="0" stop-color="#d8d8d8"/><stop offset=".55" stop-color="#bcbcbc"/><stop offset="1" stop-color="#a8a8a8"/></radialGradient></defs><circle cx="206" cy="92.8" r="15" fill="#d8d8d8"/><circle cx="206" cy="92.8" r="14" fill="#a4a4a4"/><circle cx="206" cy="92.8" r="12.6" fill="url(#g_sp)"/><rect x="200" y="86.3" width="4.2" height="12.6" rx=".8" fill="#ececec"/><rect x="208.3" y="86.3" width="4.2" height="12.6" rx=".8" fill="#ececec"/><defs><radialGradient id="g_dl" cx=".5" cy=".25" r=".8"><stop offset="0" stop-color="#90c8fc"/><stop offset=".55" stop-color="#3e8cf0"/><stop offset="1" stop-color="#1e60cc"/></radialGradient></defs><circle cx="255" cy="92.8" r="15" fill="#a8ccf4"/><circle cx="255" cy="92.8" r="14" fill="#2a72dc"/><circle cx="255" cy="92.8" r="12.6" fill="url(#g_dl)"/><path d="M249.8 87.6 L260.2 98 M260.2 87.6 L249.8 98" stroke="#fff" stroke-width="3.8" stroke-linecap="round"/></svg>
<svg class="a" style="left:360px;top:94px" width="32" height="30" viewBox="360 94 32 30"><defs><linearGradient id="g_or" x1="0" y1="0" x2="1" y2="1"><stop offset="0" stop-color="#fcb860"/><stop offset=".6" stop-color="#f88c1c"/><stop offset="1" stop-color="#fff4c0"/></linearGradient><linearGradient id="g_ar2" x1="0" y1="0" x2="1" y2="1"><stop offset="0" stop-color="#e0f0ff"/><stop offset=".5" stop-color="#90c4f8"/><stop offset=".51" stop-color="#5a9cf0"/><stop offset="1" stop-color="#2f7de8"/></linearGradient></defs><rect x="362.3" y="95.7" width="26.7" height="12.1" fill="#1a1a1a"/><rect x="363" y="98" width="25.5" height="7.5" fill="url(#g_or)"/><rect x="363.5" y="96.3" width="1.2" height="1.2" fill="#fff"/><rect x="363.5" y="106" width="1.2" height="1.2" fill="#fff"/><rect x="366.1" y="96.3" width="1.2" height="1.2" fill="#fff"/><rect x="366.1" y="106" width="1.2" height="1.2" fill="#fff"/><rect x="368.7" y="96.3" width="1.2" height="1.2" fill="#fff"/><rect x="368.7" y="106" width="1.2" height="1.2" fill="#fff"/><rect x="371.3" y="96.3" width="1.2" height="1.2" fill="#fff"/><rect x="371.3" y="106" width="1.2" height="1.2" fill="#fff"/><rect x="373.9" y="96.3" width="1.2" height="1.2" fill="#fff"/><rect x="373.9" y="106" width="1.2" height="1.2" fill="#fff"/><rect x="376.5" y="96.3" width="1.2" height="1.2" fill="#fff"/><rect x="376.5" y="106" width="1.2" height="1.2" fill="#fff"/><rect x="379.1" y="96.3" width="1.2" height="1.2" fill="#fff"/><rect x="379.1" y="106" width="1.2" height="1.2" fill="#fff"/><rect x="381.7" y="96.3" width="1.2" height="1.2" fill="#fff"/><rect x="381.7" y="106" width="1.2" height="1.2" fill="#fff"/><rect x="384.3" y="96.3" width="1.2" height="1.2" fill="#fff"/><rect x="384.3" y="106" width="1.2" height="1.2" fill="#fff"/><rect x="386.9" y="96.3" width="1.2" height="1.2" fill="#fff"/><rect x="386.9" y="106" width="1.2" height="1.2" fill="#fff"/><rect x="375" y="98" width="1.2" height="7.5" fill="#1a1a1a"/><path d="M369 101 Q369 100.3 370 100.3 H381.5 Q382.3 100.3 382.3 101 V110.5 H387 L375.4 120.5 L364 110.5 H369Z" fill="url(#g_ar2)" stroke="#1652c4" stroke-width="1.3" stroke-linejoin="round"/></svg>
<svg class="a" style="left:1163px;top:34px" width="26" height="26" viewBox="1163 34 26 26"><defs><linearGradient id="g_op" x1="0" y1="0" x2="1" y2="1"><stop offset="0" stop-color="#1a6ed8"/><stop offset=".5" stop-color="#3aa6f0"/><stop offset="1" stop-color="#2a8ce4"/></linearGradient></defs><rect x="1164" y="35" width="23" height="23" rx="3" fill="url(#g_op)"/><path d="M1164 43 Q1175 36 1187 37 V35.5 Q1186.5 35 1184 35 H1167 Q1164 35 1164 38Z" fill="#1e62c8" opacity=".6"/><circle cx="1171.7" cy="43.7" r="5" fill="none" stroke="#fff" stroke-width="2.6" stroke-dasharray="1.8 1.3"/><circle cx="1171.7" cy="43.7" r="4.3" fill="none" stroke="#fff" stroke-width="1.8"/><circle cx="1171.7" cy="43.7" r="3.2" fill="#3a7ce0"/><circle cx="1181.8" cy="45.5" r="2.6" fill="#5cc4f4" stroke="#fff" stroke-width="1.3"/><circle cx="1178.3" cy="52" r="2.6" fill="#5cc4f4" stroke="#fff" stroke-width="1.3"/></svg>
<svg class="a" style="left:1259px;top:34px" width="25" height="25" viewBox="1259 34 25 25"><defs><linearGradient id="g_bn" x1="0" y1="0" x2="1" y2="1"><stop offset="0" stop-color="#2a78dc"/><stop offset=".6" stop-color="#46b4f4"/><stop offset="1" stop-color="#2a8ce4"/></linearGradient></defs><rect x="1260" y="35" width="22" height="22" rx="3" fill="url(#g_bn)"/><ellipse cx="1274" cy="41" rx="5.2" ry="3.4" fill="#fff"/><path d="M1271 43 L1270.5 46 L1274 43.5Z" fill="#fff"/><circle cx="1268.5" cy="47.5" r="1.6" fill="#fff"/><ellipse cx="1267.5" cy="52" rx="3.8" ry="2.6" fill="#fff"/></svg>
<!-- /ICONS_TOP -->
<!-- watermark -->
<div class="t" style="left:1155px;top:690px;font-size:30px;line-height:32px;font-weight:bold;color:#fff;text-shadow:-1px 1px 1px #d8d8d8;letter-spacing:-0.6px">SOFTPEDIA</div><div class="a" style="left:1317px;top:691px;width:8px;height:8px;border:1px solid #e4e4e4;border-radius:50%"></div>

</body></html>
